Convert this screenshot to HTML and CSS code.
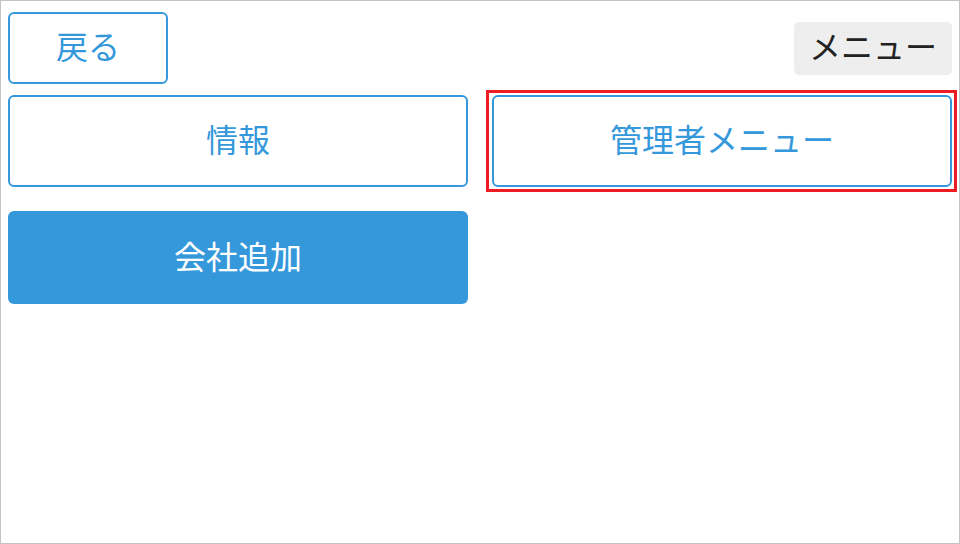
FILE: index.html
```html
<!DOCTYPE html>
<html lang="ja">
<head>
    <meta charset="UTF-8">
    <meta name="viewport" content="width=device-width, initial-scale=1.0">
    <title>管理者メニュー</title>

    <link rel="stylesheet" href="styles.css">
</head>
<body>
    <div class="screen">
        <div class="header">
            <button class="btn btn-back">戻る</button>
            <button class="btn btn-menu">メニュー</button>
        </div>

        <div class="grid">
            <button class="btn btn-outline">情報</button>
            <button class="btn btn-outline selected">管理者メニュー</button>
            <button class="btn btn-fill">会社追加</button>
        </div>
    </div>
</body>
</html>
```

FILE: styles.css
```css
* { box-sizing: border-box; }
body { margin: 0; font-family: "Noto Sans CJK JP", "Noto Sans", sans-serif; }
.screen { width: 960px; height: 544px; border: 1px solid #c4c4c4; padding: 11px 7px; }
.header { display: flex; justify-content: space-between; align-items: center; }
.btn { font-family: inherit; font-size: 32px; line-height: 1; cursor: pointer; border-radius: 6px; padding: 0 0 6px; }
.btn-back { width: 160px; height: 72px; background: #fff; border: 2px solid #3498db; color: #3498db; }
.btn-menu { width: 158px; height: 53px; background: #eeeeee; border: none; border-radius: 5px; color: #222; }
.grid { display: grid; grid-template-columns: 460px 460px; column-gap: 24px; row-gap: 24px; margin-top: 11px; }
.btn-outline { height: 92px; background: #fff; border: 2px solid #3498db; color: #3498db; }
.btn-fill { height: 93px; background: #3498db; border: none; color: #fff; }
.selected { position: relative; }
.selected::after { content: ""; position: absolute; top: -7px; left: -8px; right: -7px; bottom: -7px; border: 3px solid #ed1c24; }
```
